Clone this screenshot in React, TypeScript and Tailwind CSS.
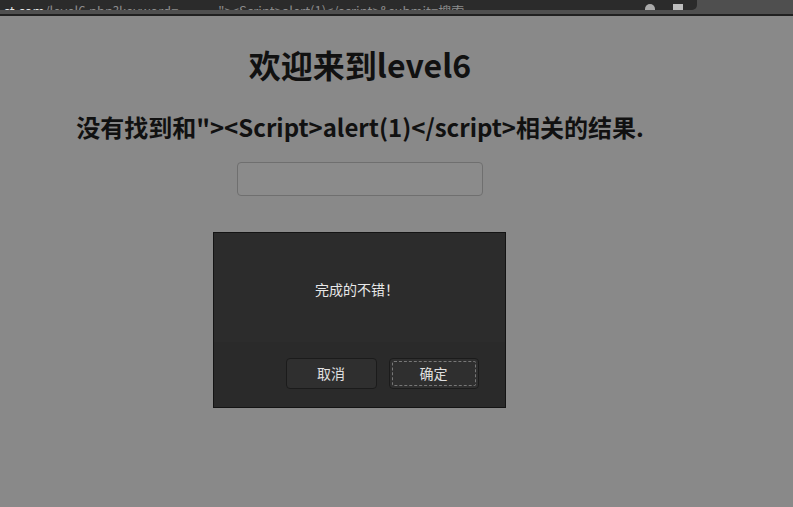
import React from "react";

const cjk = { fontFamily: '"Noto Sans CJK SC", "Noto Sans", sans-serif' };

const BrowserStrip = () => (
  <div className="h-[16px] bg-[#4f4f4f] relative">
    <div className="h-[10px] w-[697px] bg-[#2b2b2b] rounded-br-[5px] overflow-hidden flex items-end">
      <div className="flex items-end whitespace-nowrap text-[13px] leading-[16px] mb-[-9px]" style={cjk}>
        <span className="text-[#e6e6e6] pl-[4px]">st.com</span>
        <span className="text-[#8c8c8c]">/level6.php?keyword=</span>
        <span className="text-[#8c8c8c] ml-[40px]">"&gt;&lt;Script&gt;alert(1)&lt;/script&gt;&amp;submit=搜索</span>
      </div>
      <div className="ml-auto flex items-end gap-[18px] pr-[14px] mb-[-4px]">
        <span className="block w-[10px] h-[10px] rounded-full bg-[#aaaaaa]" />
        <span className="block w-[10px] h-[10px] bg-[#bdbdbd] [clip-path:polygon(0_0,100%_0,100%_100%,50%_70%,0_100%)]" />
      </div>
    </div>
    <div className="absolute left-0 right-0 bottom-0 h-[2px] bg-[#202020]" />
  </div>
);

const Dialog = () => (
  <div className="w-[293px] mx-auto border border-[#141414] bg-[#2a2a2a] text-[#e8e8e8]" style={cjk}>
    <div className="h-[109px] bg-[#2c2c2c] flex justify-center pt-[45px] pr-[4px] text-[14px] leading-[22px]">
      完成的不错！
    </div>
    <div className="flex justify-end gap-[12px] pt-[16px] pb-[18px] pr-[26px]">
      <button className="w-[91px] h-[31px] rounded-[4px] bg-[#2f2f2f] border border-[#1b1b1b] text-[14px] text-[#e0e0e0]">
        取消
      </button>
      <button className="w-[90px] h-[31px] rounded-[4px] bg-[#2f2f2f] border border-[#1b1b1b] p-[2px]">
        <span className="flex h-full w-full items-center justify-center rounded-[2px] border border-dashed border-[#777] text-[14px] text-[#e0e0e0]">
          确定
        </span>
      </button>
    </div>
  </div>
);

export default function App() {
  return (
    <div className="w-[793px] h-[507px] bg-[#898989] overflow-hidden">
      <BrowserStrip />
      <div className="w-[720px] flex flex-col items-center pt-[24px]" style={cjk}>
        <h1 className="text-[32px] leading-[48px] font-bold text-[#111]">欢迎来到level6</h1>
        <h2 className="mt-[21px] text-[24px] leading-[36px] font-bold text-[#111] whitespace-nowrap">
          没有找到和"&gt;&lt;Script&gt;alert(1)&lt;/script&gt;相关的结果.
        </h2>
        <input
          className="mt-[17px] w-[246px] h-[34px] rounded-[4px] border border-[#6f6f6f] bg-[#8b8b8b] outline-none"
          readOnly
        />
        <div className="mt-[36px] w-full pr-[2px]">
          <Dialog />
        </div>
      </div>
    </div>
  );
}
